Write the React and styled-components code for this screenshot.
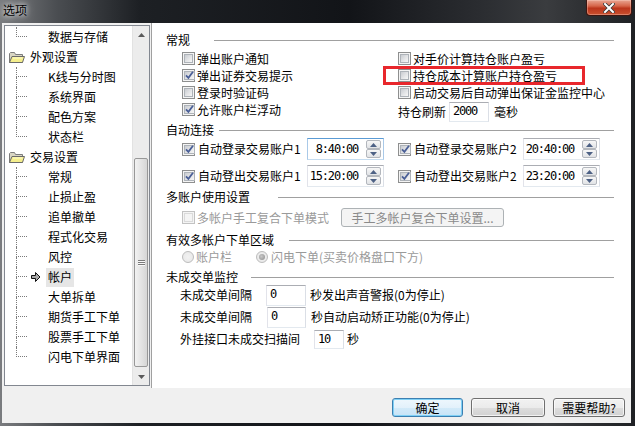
import React from "react";
import styled, { createGlobalStyle } from "styled-components";

const GlobalStyle = createGlobalStyle`
  html, body {
    margin: 0;
    padding: 0;
    background: #16191d;
  }
  body {
    font-family: "Noto Sans CJK SC", "Noto Sans", sans-serif;
    font-size: 12px;
    color: #000;
  }
  * {
    box-sizing: border-box;
  }
`;

const Window = styled.div`
  width: 635px;
  height: 426px;
  display: flex;
  flex-direction: column;
  overflow: hidden;
  background: linear-gradient(
    90deg,
    #7a7c7f 0%,
    #4a4d51 9%,
    #1d2024 22%,
    #121418 55%,
    #2b2d31 76%,
    #3a3c3f 86%,
    #1f2124 100%
  );
`;

const TitleBar = styled.div`
  height: 23px;
  flex: none;
  display: flex;
  justify-content: space-between;
  align-items: flex-start;
  padding-left: 3px;
`;

const Title = styled.span`
  margin-top: 3px;
  font-size: 12px;
  line-height: 14px;
  color: #000;
  text-shadow: 0 0 5px rgba(255, 255, 255, 0.95), 0 0 10px rgba(255, 255, 255, 0.7);
`;

const CloseButton = styled.div`
  width: 46px;
  height: 16px;
  margin-right: 3px;
  display: flex;
  align-items: center;
  justify-content: center;
  border: 1px solid #3d1610;
  border-top: none;
  border-radius: 0 0 4px 4px;
  background: linear-gradient(#e9a592 0%, #d6654a 40%, #bb351c 55%, #c9512f 100%);
  box-shadow: inset 0 0 0 1px rgba(255, 220, 210, 0.35);
`;

const Client = styled.div`
  flex: 1;
  margin: 0 4px 3px 2px;
  background: #f0f0f0;
  display: flex;
  flex-direction: column;
`;

const Main = styled.div`
  height: 365px;
  display: flex;
`;

/* ---------- tree ---------- */

const TreeBox = styled.div`
  width: 148px;
  margin: 2px 0 2px 2px;
  border: 1px solid #828790;
  background: #fff;
  display: flex;
`;

const TreeList = styled.div`
  flex: 1;
  padding-top: 1px;
  overflow: hidden;
`;

const TreeRow = styled.div`
  height: 20px;
  display: flex;
  align-items: center;
  white-space: nowrap;
  padding-left: ${(p) => (p.$group ? 4 : 11)}px;
  line-height: 14px;
`;

const Guide = styled.span`
  align-self: stretch;
  width: 11px;
  flex: none;
  display: flex;
  flex-direction: column;
`;

const GuideTop = styled.span`
  height: 10px;
  border-left: 1px dotted ${(p) => (p.$hidden ? "transparent" : "#7a7a7a")};
  border-bottom: 1px dotted #7a7a7a;
`;

const GuideBottom = styled.span`
  flex: 1;
  border-left: 1px dotted ${(p) => (p.$last ? "transparent" : "#7a7a7a")};
`;

const Marker = styled.span`
  width: 19px;
  flex: none;
  display: flex;
  align-items: center;
  padding-left: 4px;
`;

const NodeLabel = styled.span`
  height: 19px;
  display: flex;
  align-items: center;
  padding: 0 2px;
  background: ${(p) => (p.$selected ? "#e6e6e6" : "transparent")};
`;

const GroupLabel = styled.span`
  margin-left: 5px;
`;

const ScrollBar = styled.div`
  width: 17px;
  flex: none;
  display: flex;
  flex-direction: column;
  background: #ececec;
  border-left: 1px solid #e2e2e2;
`;

const ScrollArrow = styled.div`
  height: 17px;
  display: flex;
  align-items: center;
  justify-content: center;
`;

const ScrollTrack = styled.div`
  flex: 1;
  display: flex;
  flex-direction: column;
  padding: 115px 1px 1px;
`;

const Thumb = styled.div`
  flex: 1;
  border: 1px solid #989898;
  border-radius: 2px;
  background: linear-gradient(90deg, #f2f2f2, #e4e4e4 50%, #d6d6d6);
  display: flex;
  flex-direction: column;
  align-items: center;
  justify-content: center;
  gap: 1px;
`;

const Grip = styled.span`
  width: 7px;
  height: 1px;
  background: #7b7b7b;
  box-shadow: 0 1px 0 #f8f8f8;
`;

/* ---------- right panel ---------- */

const Panel = styled.div`
  flex: 1;
  margin-left: 1px;
  background: #fff;
  border-left: 1px solid #a0a0a0;
  padding: 10px 17px 0 14px;
  display: flex;
  flex-direction: column;
  line-height: 14px;
  white-space: nowrap;
`;

const GroupTitle = styled.div`
  height: 14px;
  display: flex;
  align-items: center;
  margin-top: ${(p) => p.$mt || 0}px;
  span {
    width: ${(p) => p.$w}px;
    flex: none;
  }
  &::after {
    content: "";
    flex: 1;
    height: 1px;
    background: #a0a0a0;
  }
`;

const GeneralGrid = styled.div`
  display: grid;
  grid-template-columns: 216px 1fr;
  margin: 3px 0 0 16px;
`;

const Column = styled.div`
  display: flex;
  flex-direction: column;
`;

const CheckRow = styled.label`
  position: relative;
  height: 17px;
  display: flex;
  align-items: center;
  gap: 2px;
  color: ${(p) => (p.$disabled ? "#9a9a9a" : "#000")};
`;

const Highlight = styled.span`
  position: absolute;
  left: -15px;
  top: -1px;
  width: 202px;
  height: 19px;
  border: 3px solid #e8272c;
  pointer-events: none;
`;

const BoxOuter = styled.span`
  width: 13px;
  height: 13px;
  flex: none;
  border: 1px solid ${(p) => (p.$disabled ? "#c2c2c2" : "#8e8f8f")};
  background: #f4f4f4;
  padding: 1px;
  display: flex;
`;

const BoxInner = styled.span`
  flex: 1;
  display: flex;
  align-items: center;
  justify-content: center;
  border: 1px solid ${(p) => (p.$disabled ? "#dadada" : "#aeb3b9")};
  background: ${(p) =>
    p.$disabled
      ? "#f4f4f4"
      : "linear-gradient(135deg, #c9ccd1 0%, #e4e5e7 55%, #f7f7f7 100%)"};
`;

const InlineRow = styled.div`
  height: ${(p) => p.$h || 22}px;
  display: flex;
  align-items: center;
`;

const TextBox = styled.div`
  width: ${(p) => p.$w}px;
  height: ${(p) => p.$h || 21}px;
  flex: none;
  border: 1px solid;
  border-color: #abadb3 #dbdfe6 #e3e9ef #e2e3ea;
  background: #fff;
  padding: 1px 0 0 3px;
  font-family: "DejaVu Sans Mono", "Liberation Mono", monospace;
  font-size: 12px;
  letter-spacing: -1.2px;
  line-height: 15px;
  margin: ${(p) => p.$m || "0"};
`;

const TimeGrid = styled.div`
  display: grid;
  grid-template-columns: 216px 216px;
  row-gap: 5px;
  margin: 1px 0 0 16px;
`;

const TimeCell = styled.div`
  height: 22px;
  display: flex;
  align-items: center;
`;

const TimeLabel = styled.span`
  width: 109px;
  margin-left: 3px;
`;

const TimeBox = styled.div`
  width: 77px;
  height: 22px;
  display: flex;
  align-items: center;
  border: 1px solid;
  border-color: ${(p) =>
    p.$focused ? "#5a9bd5 #a9c9e8 #c5dcf0 #a9c9e8" : "#abadb3 #dbdfe6 #e3e9ef #e2e3ea"};
  background: #fff;
  padding-right: 2px;
`;

const TimeText = styled.span`
  flex: 1;
  text-align: right;
  padding-right: 8px;
  font-family: "DejaVu Sans Mono", "Liberation Mono", monospace;
  font-size: 12px;
  letter-spacing: -1.2px;
`;

const Spin = styled.div`
  display: flex;
  flex-direction: column;
`;

const SpinButton = styled.span`
  width: 15px;
  height: 9px;
  display: flex;
  align-items: center;
  justify-content: center;
  border: 1px solid #b3b7bd;
  border-radius: 2px;
  background: linear-gradient(#f7f7f7, #e1e3e6);
`;

const MultiRow = styled.div`
  height: 19px;
  margin: 4px 0 0 16px;
  display: flex;
  align-items: center;
`;

const DisabledButton = styled.span`
  width: 163px;
  height: 19px;
  margin-left: 12px;
  display: flex;
  align-items: center;
  justify-content: center;
  border: 1px solid #adb2b5;
  border-radius: 3px;
  background: #f4f4f4;
  color: #8a8a8a;
`;

const RadioRow = styled.div`
  height: 14px;
  margin: 3px 0 0 16px;
  display: flex;
  align-items: center;
  color: #9a9a9a;
`;

const Radio = styled.span`
  width: 12px;
  height: 12px;
  border-radius: 50%;
  flex: none;
  border: 1px solid #bcbcbc;
  background: radial-gradient(circle, #f2f2f2 0%, #e6e6e6 100%);
  display: flex;
  align-items: center;
  justify-content: center;
  margin: ${(p) => p.$m || "0 2px 0 0"};
  &::after {
    content: "";
    display: ${(p) => (p.$checked ? "block" : "none")};
    width: 6px;
    height: 6px;
    border-radius: 50%;
    background: radial-gradient(circle at 40% 40%, #c8c8c8, #8c8c8c);
  }
`;

const MonitorBlock = styled.div`
  margin-left: 14px;
  display: flex;
  flex-direction: column;
`;

const FieldLabel = styled.span`
  width: ${(p) => p.$w}px;
  flex: none;
`;

/* ---------- footer ---------- */

const Footer = styled.div`
  flex: 1;
  display: flex;
  justify-content: flex-end;
  align-items: flex-start;
  gap: 8px;
  padding: 10px 6px 0 0;
`;

const Button = styled.button`
  width: ${(p) => p.$w}px;
  height: 19px;
  padding: 0;
  font: inherit;
  font-size: 12px;
  line-height: 15px;
  color: #000;
  border: 1px solid ${(p) => (p.$focused ? "#3c7fb1" : "#707070")};
  border-radius: 3px;
  background: ${(p) =>
    p.$focused
      ? "linear-gradient(#eef7fd 0%, #e3f1fb 50%, #d3eaf9 51%, #c7e3f6 100%)"
      : "linear-gradient(#f2f2f2 0%, #ebebeb 50%, #dddddd 51%, #d2d2d2 100%)"};
  box-shadow: inset 0 0 0 1px ${(p) => (p.$focused ? "#7fd0f5" : "rgba(255,255,255,0.7)")};
`;

/* ---------- icons ---------- */

const CloseIcon = () => (
  <svg width="12" height="10" viewBox="0 0 12 10">
    <path d="M2 1 L10 9 M10 1 L2 9" stroke="#3a3a3a" strokeWidth="3.6" strokeLinecap="square" />
    <path d="M2 1 L10 9 M10 1 L2 9" stroke="#fff" strokeWidth="2" strokeLinecap="square" />
  </svg>
);

const FolderIcon = () => (
  <svg width="16" height="13" viewBox="0 0 16 13">
    <path d="M0.5 2.5 V11.5 H13.5 V3.5 H6.5 L5.5 1.5 H1.5 Z" fill="#d9d6c4" stroke="#7c7c7c" />
    <path d="M0.5 11.5 L3 5.5 H15.5 L13.5 11.5 Z" fill="#f4ee8c" stroke="#6a6a6a" />
    <path d="M4 7 H13.5" stroke="#fffbd0" />
  </svg>
);

const ArrowIcon = () => (
  <svg width="10" height="10" viewBox="0 0 10 10">
    <path d="M0.5 3.5 H4.5 V0.5 L9 5 L4.5 9.5 V6.5 H0.5 Z" fill="#a9a9a9" stroke="#111" />
  </svg>
);

const CheckMark = () => (
  <svg width="9" height="9" viewBox="0 0 9 9" style={{ overflow: "visible" }}>
    <path d="M1 4.3 L3.4 6.8 L8 0.8" fill="none" stroke="#4a5f97" strokeWidth="1.8" />
  </svg>
);

const Tri = ({ up, color = "#4d6185" }) => (
  <svg width="7" height="4" viewBox="0 0 7 4">
    <path d={up ? "M0 4 L3.5 0 L7 4 Z" : "M0 0 L7 0 L3.5 4 Z"} fill={color} />
  </svg>
);

/* ---------- parts ---------- */

const CheckBox = ({ checked, disabled }) => (
  <BoxOuter $disabled={disabled}>
    <BoxInner $disabled={disabled}>{checked && <CheckMark />}</BoxInner>
  </BoxOuter>
);

const Check = ({ children, checked, disabled, highlight }) => (
  <CheckRow $disabled={disabled}>
    {highlight && <Highlight />}
    <CheckBox checked={checked} disabled={disabled} />
    {children}
  </CheckRow>
);

const TimeField = ({ label, value, focused }) => (
  <TimeCell>
    <CheckBox checked />
    <TimeLabel>{label}</TimeLabel>
    <TimeBox $focused={focused}>
      <TimeText>{value}</TimeText>
      <Spin>
        <SpinButton>
          <Tri up />
        </SpinButton>
        <SpinButton>
          <Tri />
        </SpinButton>
      </Spin>
    </TimeBox>
  </TimeCell>
);

const tree = [
  { t: "数据与存储", last: true },
  { t: "外观设置", group: true },
  { t: "K线与分时图" },
  { t: "系统界面" },
  { t: "配色方案" },
  { t: "状态栏", last: true },
  { t: "交易设置", group: true },
  { t: "常规" },
  { t: "止损止盈" },
  { t: "追单撤单" },
  { t: "程式化交易" },
  { t: "风控" },
  { t: "帐户", selected: true },
  { t: "大单拆单" },
  { t: "期货手工下单" },
  { t: "股票手工下单" },
  { t: "闪电下单界面", last: true },
];

const App = () => {
  return (
    <>
      <GlobalStyle />
      <Window>
        <TitleBar>
          <Title>选项</Title>
          <CloseButton>
            <CloseIcon />
          </CloseButton>
        </TitleBar>
        <Client>
          <Main>
            <TreeBox>
              <TreeList>
                {tree.map((item) =>
                  item.group ? (
                    <TreeRow key={item.t} $group>
                      <FolderIcon />
                      <GroupLabel>{item.t}</GroupLabel>
                    </TreeRow>
                  ) : (
                    <TreeRow key={item.t}>
                      <Guide>
                        <GuideTop />
                        <GuideBottom $last={item.last} />
                      </Guide>
                      <Marker>{item.selected && <ArrowIcon />}</Marker>
                      <NodeLabel $selected={item.selected}>{item.t}</NodeLabel>
                    </TreeRow>
                  )
                )}
              </TreeList>
              <ScrollBar>
                <ScrollArrow>
                  <Tri up color="#5a5a5a" />
                </ScrollArrow>
                <ScrollTrack>
                  <Thumb>
                    <Grip />
                    <Grip />
                    <Grip />
                  </Thumb>
                </ScrollTrack>
                <ScrollArrow>
                  <Tri color="#5a5a5a" />
                </ScrollArrow>
              </ScrollBar>
            </TreeBox>

            <Panel>
              <GroupTitle $w={48}>
                <span>常规</span>
              </GroupTitle>
              <GeneralGrid>
                <Column>
                  <Check>弹出账户通知</Check>
                  <Check checked>弹出证券交易提示</Check>
                  <Check>登录时验证码</Check>
                  <Check checked>允许账户栏浮动</Check>
                </Column>
                <Column>
                  <Check>对手价计算持仓账户盈亏</Check>
                  <Check highlight>持仓成本计算账户持仓盈亏</Check>
                  <Check>启动交易后自动弹出保证金监控中心</Check>
                  <InlineRow>
                    <span>持仓刷新</span>
                    <TextBox $w={40} $h={20} $m="0 5px 0 3px">
                      2000
                    </TextBox>
                    <span>毫秒</span>
                  </InlineRow>
                </Column>
              </GeneralGrid>

              <GroupTitle $w={53}>
                <span>自动连接</span>
              </GroupTitle>
              <TimeGrid>
                <TimeField label="自动登录交易账户1" value="8:40:00" focused />
                <TimeField label="自动登录交易账户2" value="20:40:00" />
                <TimeField label="自动登出交易账户1" value="15:20:00" />
                <TimeField label="自动登出交易账户2" value="23:20:00" />
              </TimeGrid>

              <GroupTitle $w={112} $mt={3}>
                <span>多账户使用设置</span>
              </GroupTitle>
              <MultiRow>
                <Check disabled>多帐户手工复合下单模式</Check>
                <DisabledButton>手工多帐户复合下单设置...</DisabledButton>
              </MultiRow>

              <GroupTitle $w={123} $mt={6}>
                <span>有效多帐户下单区域</span>
              </GroupTitle>
              <RadioRow>
                <Radio />
                <span>账户栏</span>
                <Radio $checked $m="0 3px 0 24px" />
                <span>闪电下单(买卖价格盘口下方)</span>
              </RadioRow>

              <GroupTitle $w={85} $mt={6}>
                <span>未成交单监控</span>
              </GroupTitle>
              <MonitorBlock>
                <InlineRow>
                  <FieldLabel $w={86}>未成交单间隔</FieldLabel>
                  <TextBox $w={40} $m="0 4px 0 0">
                    0
                  </TextBox>
                  <span>秒发出声音警报(0为停止)</span>
                </InlineRow>
                <InlineRow>
                  <FieldLabel $w={87}>未成交单间隔</FieldLabel>
                  <TextBox $w={39} $m="0 5px 0 0">
                    0
                  </TextBox>
                  <span>秒自动启动矫正功能(0为停止)</span>
                </InlineRow>
                <InlineRow>
                  <FieldLabel $w={134}>外挂接口未成交扫描间</FieldLabel>
                  <TextBox $w={30} $h={19} $m="0 3px 0 0">
                    10
                  </TextBox>
                  <span>秒</span>
                </InlineRow>
              </MonitorBlock>
            </Panel>
          </Main>

          <Footer>
            <Button $w={71} $focused>
              确定
            </Button>
            <Button $w={74}>取消</Button>
            <Button $w={72}>需要帮助?</Button>
          </Footer>
        </Client>
      </Window>
    </>
  );
};

export default App;
